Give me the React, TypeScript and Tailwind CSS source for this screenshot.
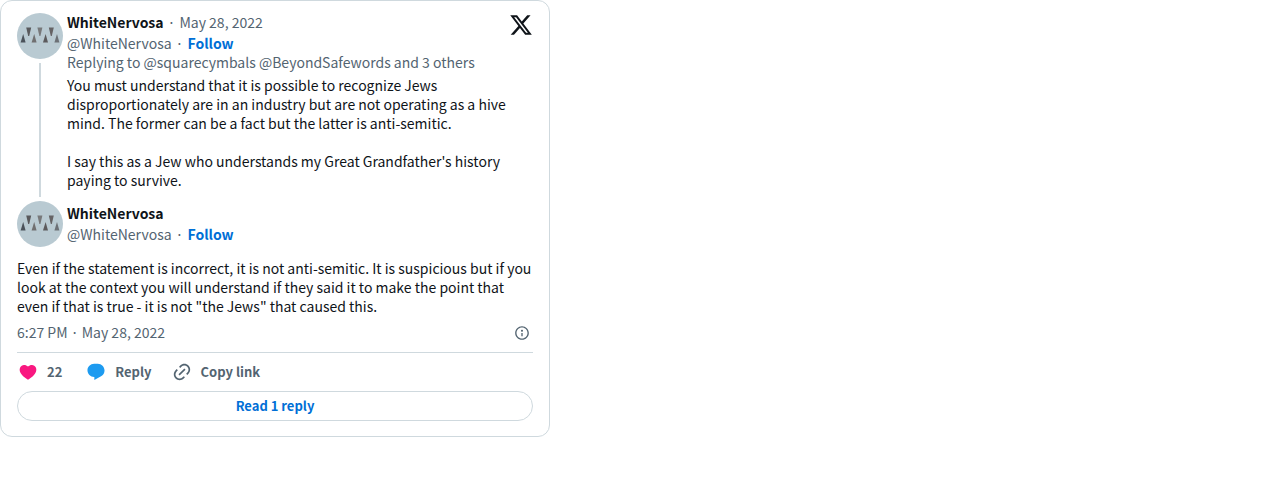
import { ReactNode } from "react";

const HANDLE = "WhiteNervosa";

function Avatar() {
  return (
    <svg viewBox="0 0 46 46" className="size-[46px] shrink-0" aria-hidden="true">
      <circle cx="23" cy="23" r="23" fill="#b9cad2" />
      <path d="M6.2 21 8.6 29.500H3.600z" fill="#4b525a" />
      <path d="M9.200 14.500h5l-2 8.500h-1z" fill="#59595c" />
      <path d="M17.200 21l2.400 8.500h-5z" fill="#706f70" />
      <path d="M20.400 14.500h5l-2 8.500h-1z" fill="#77787a" />
      <path d="M28.600 21l2.400 8.500h-5z" fill="#5c5a5c" />
      <path d="M31.800 14.500h5l-2 8.500h-1z" fill="#656365" />
      <path d="M40 21l2.400 8.500h-5z" fill="#6c7075" />
    </svg>
  );
}

function Icon({ d, className }: { d: string; className: string }) {
  return (
    <svg viewBox="0 0 24 24" fill="currentColor" className={className} aria-hidden="true">
      <path d={d} />
    </svg>
  );
}

function Author({ date }: { date?: string }) {
  return (
    <div className="text-[#536471]">
      <div className="flex gap-x-1 leading-[18px]">
        <a href="#profile" className="font-bold text-[#0f1419]">
          {HANDLE}
        </a>
        {date && (
          <>
            <span>·</span>
            <a href="#status">{date}</a>
          </>
        )}
      </div>
      <div className="mt-[3px] flex gap-x-1">
        <a href="#profile">@{HANDLE}</a>
        <span>·</span>
        <a href="#follow" className="font-bold text-[#006fd6]">
          Follow
        </a>
      </div>
    </div>
  );
}

function Action({ icon, children }: { icon: ReactNode; children: ReactNode }) {
  return (
    <button type="button" className="flex items-center gap-x-[9px] text-[13px] font-bold text-[#536471]">
      {icon}
      <span className="pb-[2px]">{children}</span>
    </button>
  );
}

export default function App() {
  return (
    <article className="max-w-[550px] rounded-xl border border-[#cfd9de] bg-white px-4 pt-3 pb-[15px] font-['Noto_Sans_CJK_JP',sans-serif] text-sm leading-[19px] text-[#0f1419]">
      <div className="flex gap-x-1">
        <div className="flex flex-col items-center">
          <Avatar />
          <div className="mt-1 mb-1 w-[2px] grow bg-[#cfd9de]" />
        </div>
        <div className="min-w-0 grow pb-[11px]">
          <div className="flex items-start justify-between">
            <Author date="May 28, 2022" />
            <a href="#x" aria-label="View on X">
              <Icon
                className="size-6 text-[#0f1419]"
                d="M18.244 2.25h3.308l-7.227 8.26 8.502 11.24H16.17l-5.214-6.817L4.99 21.75H1.68l7.73-8.835L1.254 2.25H8.08l4.713 6.231zm-1.161 17.52h1.833L7.084 4.126H5.117z"
              />
            </a>
          </div>
          <p className="text-[#536471]">Replying to @squarecymbals @BeyondSafewords and 3 others</p>
          <p className="mt-1 max-w-[450px]">
            You must understand that it is possible to recognize Jews disproportionately are in an
            industry but are not operating as a hive mind. The former can be a fact but the latter is
            anti-semitic.
          </p>
          <p className="mt-[19px] max-w-[450px]">
            I say this as a Jew who understands my Great Grandfather's history paying to survive.
          </p>
        </div>
      </div>

      <div className="flex items-center gap-x-1">
        <Avatar />
        <Author />
      </div>

      <p className="mt-3">
        Even if the statement is incorrect, it is not anti-semitic. It is suspicious but if you look
        at the context you will understand if they said it to make the point that even if that is
        true - it is not "the Jews" that caused this.
      </p>

      <div className="mt-[6px] flex items-center justify-between pr-[3px] leading-[21px] text-[#536471]">
        <a href="#status">6:27 PM · May 28, 2022</a>
        <a href="#info" aria-label="X Ads info and privacy">
          <Icon
            className="size-4"
            d="M13.5 8.5c0 .83-.67 1.5-1.5 1.5s-1.5-.67-1.5-1.5S11.17 7 12 7s1.5.67 1.5 1.5zM13 17v-5h-2v5h2zm-1 5.25c5.66 0 10.25-4.59 10.25-10.25S17.66 1.75 12 1.75 1.75 6.34 1.75 12 6.34 22.25 12 22.25zM20.25 12c0 4.56-3.69 8.25-8.25 8.25S3.75 16.56 3.75 12 7.44 3.75 12 3.75s8.25 3.69 8.25 8.25z"
          />
        </a>
      </div>

      <div className="mt-[9px] flex h-[39px] items-center gap-x-5 border-t border-[#cfd9de] pl-[1px]">
        <Action
          icon={
            <Icon
              className="size-5 text-[#f91880]"
              d="M20.884 13.19c-1.351 2.48-4.001 5.12-8.379 7.67l-.503.3-.504-.3c-4.379-2.55-7.029-5.19-8.382-7.67-1.36-2.5-1.41-4.86-.514-6.67.887-1.79 2.647-2.91 4.601-3.01 1.651-.09 3.368.56 4.798 2.01 1.429-1.45 3.146-2.1 4.796-2.01 1.954.1 3.714 1.22 4.601 3.01.896 1.81.846 4.17-.514 6.67z"
            />
          }
        >
          <span className="pr-1">22</span>
        </Action>
        <Action
          icon={
            <Icon
              className="size-5 text-[#1d9bf0]"
              d="M1.751 10c0-4.42 3.584-8 8.005-8h4.366c4.49 0 8.129 3.64 8.129 8.13 0 2.96-1.607 5.68-4.196 7.11l-8.054 4.46v-3.69h-.067c-4.49.1-8.183-3.51-8.183-8.01z"
            />
          }
        >
          Reply
        </Action>
        <Action
          icon={
            <Icon
              className="size-5"
              d="M18.36 5.64c-1.95-1.96-5.11-1.96-7.07 0L9.88 7.05 8.46 5.64l1.42-1.42c2.73-2.73 7.16-2.73 9.9 0 2.73 2.74 2.73 7.17 0 9.9l-1.42 1.42-1.41-1.42 1.41-1.41c1.96-1.96 1.96-5.12 0-7.07zm-2.12 3.53l-7.07 7.07-1.41-1.41 7.07-7.07 1.41 1.41zm-12.02.71l1.42-1.42 1.41 1.42-1.41 1.41c-1.96 1.96-1.96 5.12 0 7.07 1.95 1.96 5.11 1.96 7.07 0l1.41-1.41 1.42 1.41-1.42 1.42c-2.73 2.73-7.16 2.73-9.9 0-2.73-2.74-2.73-7.17 0-9.9z"
            />
          }
        >
          Copy link
        </Action>
      </div>

      <button
        type="button"
        className="flex h-[30px] w-full items-center justify-center rounded-full border border-[#cfd9de] pb-[2px] text-[13px] font-bold text-[#006fd6]"
      >
        Read 1 reply
      </button>
    </article>
  );
}
